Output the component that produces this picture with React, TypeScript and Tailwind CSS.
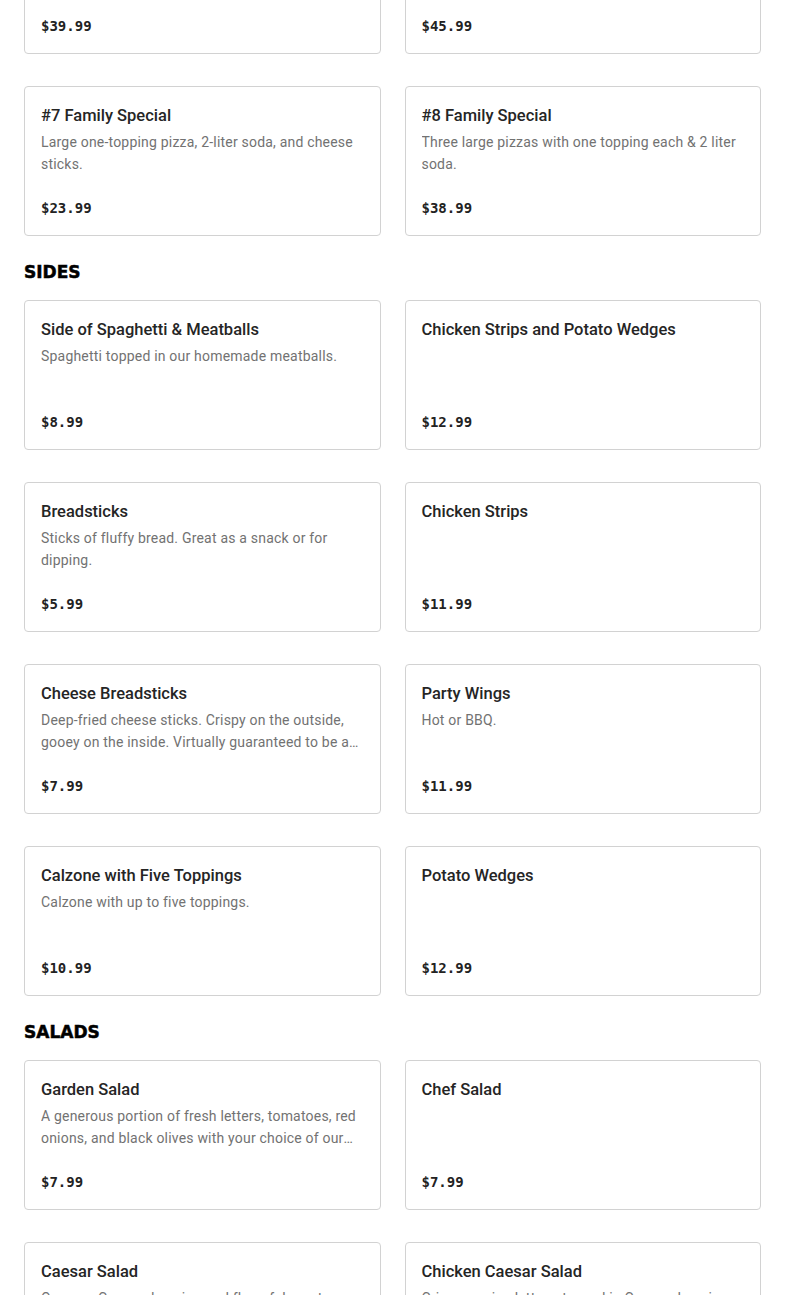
import React from 'react';

interface MenuItem {
    name: string;
    description?: string;
    price: string;
}

interface MenuSection {
    title?: string;
    items: MenuItem[];
}

const sections: MenuSection[] = [
    {
        items: [
            { name: '#5 Family Special', description: 'Two large pizzas with one topping each.', price: '$39.99' },
            { name: '#6 Family Special', description: 'Two large pizzas, breadsticks and a 2 liter soda.', price: '$45.99' },
            { name: '#7 Family Special', description: 'Large one-topping pizza, 2-liter soda, and cheese sticks.', price: '$23.99' },
            { name: '#8 Family Special', description: 'Three large pizzas with one topping each & 2 liter soda.', price: '$38.99' },
        ],
    },
    {
        title: 'SIDES',
        items: [
            { name: 'Side of Spaghetti & Meatballs', description: 'Spaghetti topped in our homemade meatballs.', price: '$8.99' },
            { name: 'Chicken Strips and Potato Wedges', price: '$12.99' },
            { name: 'Breadsticks', description: 'Sticks of fluffy bread. Great as a snack or for dipping.', price: '$5.99' },
            { name: 'Chicken Strips', price: '$11.99' },
            { name: 'Cheese Breadsticks', description: 'Deep-fried cheese sticks. Crispy on the outside, gooey on the inside. Virtually guaranteed to be a hit with the whole family.', price: '$7.99' },
            { name: 'Party Wings', description: 'Hot or BBQ.', price: '$11.99' },
            { name: 'Calzone with Five Toppings', description: 'Calzone with up to five toppings.', price: '$10.99' },
            { name: 'Potato Wedges', price: '$12.99' },
        ],
    },
    {
        title: 'SALADS',
        items: [
            { name: 'Garden Salad', description: 'A generous portion of fresh letters, tomatoes, red onions, and black olives with your choice of our homemade dressings.', price: '$7.99' },
            { name: 'Chef Salad', price: '$7.99' },
            { name: 'Caesar Salad', description: 'Our own Caesar dressing and flavorful croutons top crisp romaine lettuce.', price: '$7.99' },
            { name: 'Chicken Caesar Salad', description: 'Crisp romaine lettuce tossed in Caesar dressing with grilled chicken.', price: '$8.99' },
        ],
    },
];

function MenuCard({ item }: { item: MenuItem }) {
    return (
        <div className="flex h-[150px] flex-col rounded border border-[#d2d2d2] bg-white px-4 pt-4 pb-4">
            <div className="text-[16.5px] leading-[25px] font-medium text-[#252525]">{item.name}</div>
            <div className="mt-[3px] line-clamp-2 h-11 text-[14px] leading-[22px] tracking-[0.2px] text-[#727272]">
                {item.description}
            </div>
            <div
                className="mt-auto text-[14px] leading-[22px] font-bold text-[#222]"
                style={{ fontFamily: '"DejaVu Sans Mono", monospace' }}
            >
                {item.price}
            </div>
        </div>
    );
}

export default function App() {
    return (
        <div className="min-h-screen overflow-hidden bg-white px-6" style={{ fontFamily: 'Roboto, "Liberation Sans", sans-serif' }}>
            <div className="-mt-[96px] pb-10">
                {sections.map((section, i) => (
                    <div key={i} className={i > 0 ? 'mt-6' : ''}>
                        {section.title && (
                            <h2
                                className="mb-4 text-[17px] leading-6 font-bold text-black [-webkit-text-stroke:0.5px_black]"
                                style={{ fontFamily: '"DejaVu Sans", sans-serif' }}
                            >
                                {section.title}
                            </h2>
                        )}
                        <div className="grid grid-cols-2 gap-x-6 gap-y-8">
                            {section.items.map((item) => (
                                <MenuCard key={item.name} item={item} />
                            ))}
                        </div>
                    </div>
                ))}
            </div>
        </div>
    );
}
